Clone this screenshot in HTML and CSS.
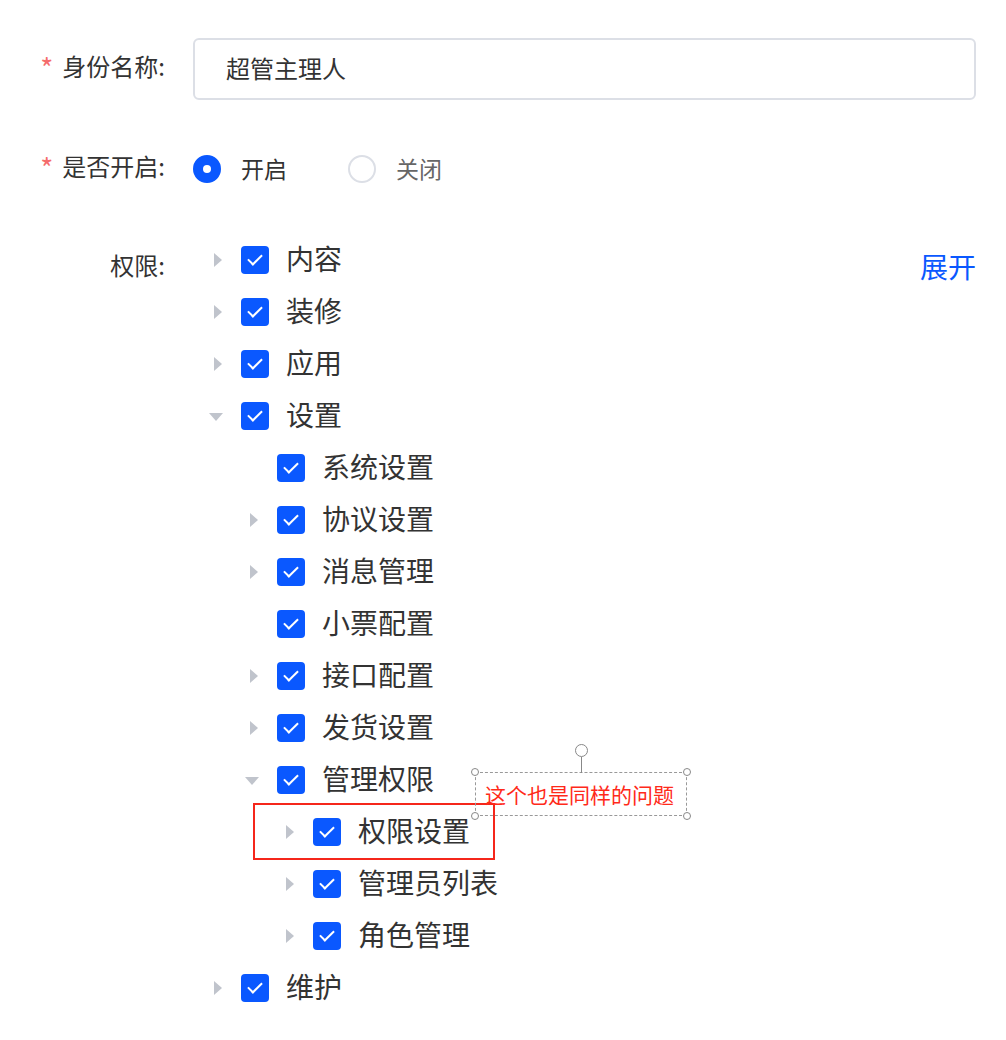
FILE: index.html
```html
<!DOCTYPE html>
<html lang="zh-CN">
<head>
<meta charset="utf-8">
<link rel="stylesheet" href="styles.css">
</head>
<body>
<div class="form">
  <div class="item item-name">
    <div class="label"><span class="req">*</span>身份名称:</div>
    <div class="content">
      <div class="input">超管主理人</div>
    </div>
  </div>
  <div class="item item-radio">
    <div class="label"><span class="req">*</span>是否开启:</div>
    <div class="content radios">
      <div class="radio on"><span class="dot"></span><span class="rt">开启</span></div>
      <div class="radio"><span class="dot"></span><span class="rt">关闭</span></div>
    </div>
  </div>
  <div class="item item-tree">
    <div class="label tree-label">权限:</div>
    <div class="content tree-wrap">
      <div class="tree">
        <div class="node"><span class="caret right"></span><span class="cb"></span><span class="nt">内容</span></div>
        <div class="node"><span class="caret right"></span><span class="cb"></span><span class="nt">装修</span></div>
        <div class="node"><span class="caret right"></span><span class="cb"></span><span class="nt">应用</span></div>
        <div class="node"><span class="caret down"></span><span class="cb"></span><span class="nt">设置</span></div>
        <div class="node l1"><span class="caret"></span><span class="cb"></span><span class="nt">系统设置</span></div>
        <div class="node l1"><span class="caret right"></span><span class="cb"></span><span class="nt">协议设置</span></div>
        <div class="node l1"><span class="caret right"></span><span class="cb"></span><span class="nt">消息管理</span></div>
        <div class="node l1"><span class="caret"></span><span class="cb"></span><span class="nt">小票配置</span></div>
        <div class="node l1"><span class="caret right"></span><span class="cb"></span><span class="nt">接口配置</span></div>
        <div class="node l1"><span class="caret right"></span><span class="cb"></span><span class="nt">发货设置</span></div>
        <div class="node l1"><span class="caret down"></span><span class="cb"></span><span class="nt">管理权限</span></div>
        <div class="node l2"><span class="caret right"></span><span class="cb"></span><span class="nt">权限设置</span></div>
        <div class="node l2"><span class="caret right"></span><span class="cb"></span><span class="nt">管理员列表</span></div>
        <div class="node l2"><span class="caret right"></span><span class="cb"></span><span class="nt">角色管理</span></div>
        <div class="node"><span class="caret right"></span><span class="cb"></span><span class="nt">维护</span></div>
      </div>
      <a class="expand">展开</a>
    </div>
  </div>
</div>
<div class="mark-rect"></div>
<div class="note">
  <span class="handle"></span>
  <span class="h-line"></span>
  <span class="corner tl"></span><span class="corner tr"></span><span class="corner bl"></span><span class="corner br"></span>
  <span class="note-text">这个也是同样的问题</span>
</div>
</body>
</html>
```
FILE: styles.css
```css
html, body {
  margin: 0;
  padding: 0;
  background: #fff;
}
body {
  font-family: "Noto Sans CJK SC", "Noto Sans", sans-serif;
  color: #333;
  position: relative;
  width: 1006px;
  height: 1040px;
  overflow: hidden;
}
.form {
  padding-top: 38px;
  padding-right: 30px;
}
.item {
  display: flex;
  align-items: center;
}
.label {
  flex: none;
  width: 193px;
  box-sizing: border-box;
  padding-right: 28px;
  padding-bottom: 5px;
  text-align: right;
  font-size: 24px;
  line-height: 32px;
  color: #333;
}
.req {
  color: #f56c6c;
  margin-right: 9px;
  font-size: 28px;
  vertical-align: top;
  line-height: 34px;
}
.content {
  flex: 1;
}
.input {
  height: 62px;
  box-sizing: border-box;
  border: 2px solid #dcdfe6;
  border-radius: 6px;
  padding-left: 31px;
  padding-bottom: 2px;
  font-size: 24px;
  line-height: 56px;
  color: #333;
}
.item-radio {
  margin-top: 49px;
  height: 40px;
}
.radios {
  display: flex;
  align-items: center;
}
.radio {
  display: flex;
  align-items: center;
  margin-right: 61px;
}
.dot {
  width: 28px;
  height: 28px;
  box-sizing: border-box;
  border-radius: 50%;
  border: 2px solid #dcdfe6;
  background: #fff;
  position: relative;
}
.radio.on .dot {
  border-color: #0a58ff;
  background: #0a58ff;
}
.radio.on .dot::after {
  content: "";
  position: absolute;
  left: 50%;
  top: 50%;
  width: 8px;
  height: 8px;
  margin: -4px 0 0 -4px;
  border-radius: 50%;
  background: #fff;
}
.rt {
  font-size: 23px;
  line-height: 32px;
  padding-bottom: 2px;
  margin-left: 20px;
  color: #333;
}
.radio:not(.on) .rt {
  color: #666;
}
.item-tree {
  margin-top: 45px;
  align-items: flex-start;
}
.tree-label {
  margin-top: 15px;
}
.tree-wrap {
  display: flex;
  justify-content: space-between;
  align-items: flex-start;
}
.node {
  display: flex;
  align-items: center;
  height: 52px;
}
.node.l1 { padding-left: 36px; }
.node.l2 { padding-left: 72px; }
.caret {
  width: 48px;
  height: 52px;
  flex: none;
  position: relative;
}
.caret.right::after {
  content: "";
  position: absolute;
  left: 21px;
  top: 19px;
  border-left: 8px solid #c0c4cc;
  border-top: 7px solid transparent;
  border-bottom: 7px solid transparent;
}
.caret.down::after {
  content: "";
  position: absolute;
  left: 16px;
  top: 23px;
  border-top: 8px solid #c0c4cc;
  border-left: 7.5px solid transparent;
  border-right: 7.5px solid transparent;
}
.cb {
  width: 28px;
  height: 28px;
  border-radius: 4px;
  background: #0a58ff;
  position: relative;
  flex: none;
}
.cb::after {
  content: "";
  position: absolute;
  left: 10px;
  top: 5px;
  width: 6px;
  height: 12px;
  border-right: 2.5px solid #fff;
  border-bottom: 2.5px solid #fff;
  transform: rotate(45deg);
}
.nt {
  font-size: 28px;
  line-height: 40px;
  padding-bottom: 4px;
  margin-left: 17px;
  color: #333;
}
.expand {
  font-size: 28px;
  line-height: 40px;
  margin-top: 12px;
  color: #0a58ff;
  cursor: pointer;
}
.mark-rect {
  position: absolute;
  left: 253px;
  top: 803px;
  width: 242px;
  height: 57px;
  box-sizing: border-box;
  border: 2px solid #f5261b;
}
.note {
  position: absolute;
  left: 475px;
  top: 772px;
  width: 212px;
  height: 44px;
  box-sizing: border-box;
  border: 1px dashed #999;
}
.note-text {
  position: absolute;
  left: 9px;
  top: 6px;
  font-size: 21px;
  line-height: 30px;
  color: #ff2a1a;
  white-space: nowrap;
}
.corner {
  position: absolute;
  width: 8px;
  height: 8px;
  box-sizing: border-box;
  border: 1px solid #888;
  border-radius: 50%;
  background: #fff;
}
.corner.tl { left: -5px; top: -5px; }
.corner.tr { right: -5px; top: -5px; }
.corner.bl { left: -5px; bottom: -5px; }
.corner.br { right: -5px; bottom: -5px; }
.handle {
  position: absolute;
  left: 99px;
  top: -29px;
  width: 13px;
  height: 13px;
  box-sizing: border-box;
  border: 1px solid #888;
  border-radius: 50%;
  background: #fff;
}
.h-line {
  position: absolute;
  left: 105px;
  top: -16px;
  width: 1px;
  height: 16px;
  background: #888;
}
```
